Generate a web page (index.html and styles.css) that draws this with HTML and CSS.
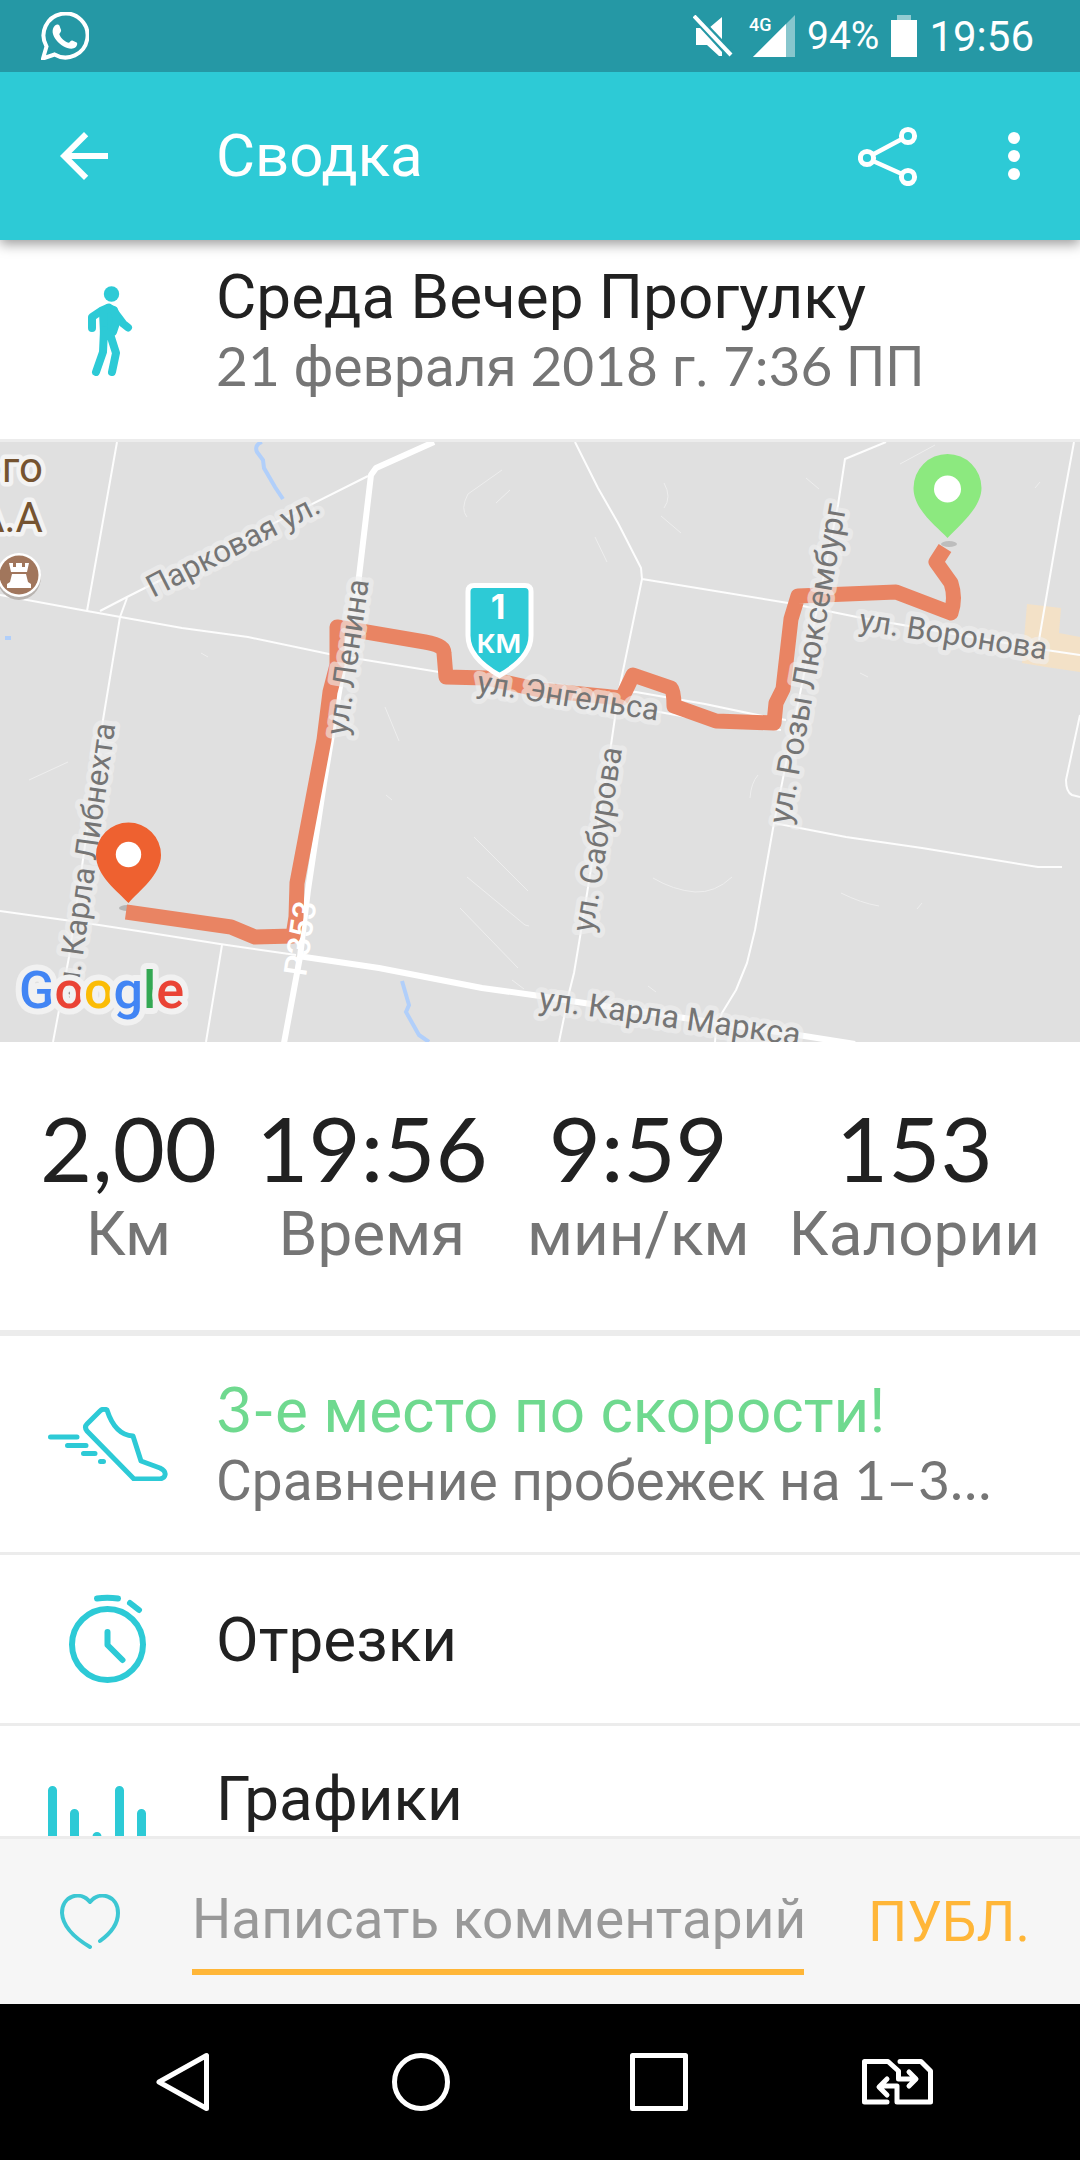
FILE: index.html
```html
<!DOCTYPE html>
<html lang="ru">
<head>
<meta charset="utf-8">
<meta name="viewport" content="width=device-width, initial-scale=1">
<title>Сводка</title>
<link rel="stylesheet" href="styles.css">
</head>
<body>
<div class="status">
  <svg class="status-app" width="48" height="48" viewBox="0 0 48 48" fill="none" aria-hidden="true">
    <path d="M2 46.500L5.500 34.500A22 22 0 1 1 13.500 42.500Z" stroke="#fff" stroke-width="4" stroke-linejoin="miter"/>
    <path d="M14 13.500c2-1.500 4-1 4.600.5l1.500 4.200c.4 1.500-1.800 3-1.800 4 1.200 3.600 5.400 7.400 9.200 8.600 1.300 0 2.400-2.600 3.800-2.200l4.400 2c1 .7.500 3.200-.8 4.400-3.400 3-8.400 1.400-12.600-.8-5.200-3-9.600-8-10.600-13.400-.4-2.800.4-5.600 2.300-7.300z" fill="#fff"/>
  </svg>
  <div class="status-right">
    <svg width="40" height="42" viewBox="0 0 40 42" aria-hidden="true">
      <path d="M3 13h4l22 24v4h-3L14 30H3zM16 13l13-11v26z" fill="#fff"/>
      <path d="M5 1l35 37" stroke="#2598a5" stroke-width="3"/>
      <path d="M1 1l37 39" stroke="#fff" stroke-width="4"/>
    </svg>
    <span class="signal">
      <span class="signal-type">4G</span>
      <svg width="42" height="42" viewBox="0 0 42 42" aria-hidden="true">
        <path d="M0 42L42 0v42z" fill="#fff" opacity=".45"/><path d="M0 42L33 9v33z" fill="#fff"/>
      </svg>
    </span>
    <span class="battery-text">94%</span>
    <svg width="26" height="42" viewBox="0 0 26 42" aria-hidden="true">
      <path d="M6 0h14v5H6z" fill="#fff" opacity=".5"/><path d="M0 5h26v37H0z" fill="#fff"/>
    </svg>
    <span class="clock">19:56</span>
  </div>
</div>

<header class="appbar">
  <button class="icon-btn back" type="button" aria-label="Назад">
    <svg width="72" height="72" viewBox="0 0 24 24" fill="#fff"><path d="M20 11H7.830l5.590-5.590L12 4l-8 8 8 8 1.410-1.410L7.830 13H20v-2z"/></svg>
  </button>
  <h1 class="appbar-title">Сводка</h1>
  <button class="icon-btn" type="button" aria-label="Поделиться">
    <svg width="60" height="60" viewBox="0 0 60 60" fill="none" stroke="#fff">
      <g stroke-width="5"><circle cx="9" cy="32" r="6.600"/><circle cx="50" cy="10" r="6.600"/><circle cx="50" cy="51" r="6.600"/></g>
      <path d="M15 28.500L44 13M15 35l29 13" stroke-width="4.500"/>
    </svg>
  </button>
  <button class="icon-btn more" type="button" aria-label="Ещё">
    <svg width="12" height="48" viewBox="0 0 12 48" fill="#fff"><circle cx="6" cy="6" r="6"/><circle cx="6" cy="24" r="6"/><circle cx="6" cy="42" r="6"/></svg>
  </button>
</header>

<main class="content">
  <section class="activity">
    <svg class="row-icon" width="216" height="90" viewBox="0 0 216 90" aria-hidden="true">
      <g fill="#2dcad6" stroke="#2dcad6" stroke-linecap="round" stroke-linejoin="round">
        <circle cx="111.500" cy="8" r="7.700" stroke="none"/>
        <path d="M92 42V31l9-6 8-3.500 5 4 9 12 5 4" fill="none" stroke-width="8"/>
        <path d="M103 26l5-4 6 2 3 10-4 12-9 2z" stroke-width="8"/>
        <path d="M104 44l-1 22-7 20M110 48l6 19-4 19" fill="none" stroke-width="8"/>
      </g>
    </svg>
    <div class="row-text">
      <h2 class="row-title">Среда Вечер Прогулку</h2>
      <p class="row-sub"><span class="num">21</span> февраля <span class="num">2018</span> г. <span class="num">7:36</span> ПП</p>
    </div>
  </section>

  <svg class="map" viewBox="0 442 1080 600" role="img" aria-label="Карта маршрута">
    <rect y="442" width="1080" height="600" fill="#e0e0e0"/>
    <path d="M1027 604l34 4-2 25 21 4v35l-34-5-24-4z" fill="#f3e1c7"/>
    <g fill="none" stroke="#eee" stroke-width="1">
      <path d="M502 470l-34 24q-8 15-1 23M510 490l-14 13M386 795l6 5M474 837l54 54M467 877l58 48 4 1M460 908l58 60M29 780l39-18M900 464l35-19M806 478l13 11M661 516l20 17M664 483q8 14 0 25M595 537l12 25M653 878q20 12 42 14 20 1 37-15M841 893q20 10 38 13M750 798q1-15 8-23M860 673l8 4M385 707l14 34M201 653l7 4M1035 488l5-6M917 909l5-6M648 986l8 6M512 980l12 9"/>
    </g>
    <g fill="none" stroke="#fdfdfd" stroke-width="2" stroke-linejoin="round">
      <path d="M117 442L87 611M100 611l27-14 241-121M127 598l-7 19-17 103-34 237-16 85M222 945l-16 97"/>
      <path d="M0 595l87 16 95 17 66 9 81 17 110 18 100 14 97 6 69 12 62 13 19 3M654 711l60 11 67 8"/>
      <path d="M575 442l23 46 20 35 23 45 1 11-23 111-8 55-31 192-6 36-5 20-10 49M642 579l146 24 69 14 189 33 34 5"/>
      <path d="M1074 442l-14 76-15 87-6 35M886 442l-41 17-7 46-64 318-19 107-8 33-11 27-14 23-6 17-1 12M774 823l72 14 76 11 116 19h24M1080 715l-8 37-6 28q0 12 6 15l8 2"/>
      <path d="M0 911l86 12 52 8 82 13 76 11"/>
    </g>
    <g fill="none" stroke="#fff" stroke-width="6" stroke-linejoin="round">
      <path d="M434 442l-58 26-5 7-13 110-19 107-15 91-16 107-8 67-16 86M298 956l81 12 103 20 58 8 31 5 227 34 57 9"/>
    </g>
    <path d="M262 442q-8 3-5 10l6 8 1 8 11 19 8 12M402 981l7 24-3 7 13 23 10 7M5 638h6" fill="none" stroke="#b1cffa" stroke-width="4"/>
    <ellipse cx="127" cy="908" rx="8" ry="3" fill="#b5b5b5"/>
    <path d="M126 912l105 15 24 10 38-1 3-19 1-34 27-143 6-48 7-27v-38l88 15q19 3 19 11l2 24 40 1 54 12 82 8 11-23 38 13q3 3 3 18l42 15 58 2 2-20 7-14 8-70 7-23 98-4 55 21q5-15 0-30l-15-21 9-14" fill="none" stroke="#e98463" stroke-width="15" stroke-linejoin="round"/>
    <g class="map-label">
      <text transform="translate(153 598) rotate(-27)">Парковая ул.</text>
      <text transform="translate(347 736) rotate(-82)">ул. Ленина</text>
      <text transform="translate(476 692) rotate(9)">ул. Энгельса</text>
      <text class="map-label-main" transform="translate(790 825) rotate(-80)">ул. Розы Люксембург</text>
      <text transform="translate(858 630) rotate(9)">ул. Воронова</text>
      <text transform="translate(593 933) rotate(-81)">ул. Сабурова</text>
      <text transform="translate(76 1004) rotate(-82)">ул. Карла Либнехта</text>
      <text class="map-label-main" transform="translate(538 1009) rotate(8)">ул. Карла Маркса</text>
    </g>
    <text class="map-road" transform="translate(306 977) rotate(-82)">P353</text>
    <g class="map-place">
      <text x="43" y="482" text-anchor="end">ого</text>
      <text x="43" y="532" text-anchor="end">А.А</text>
    </g>
    <ellipse cx="19" cy="577" rx="22" ry="23" fill="#b9b4b0"/>
    <circle cx="19" cy="575" r="22" fill="#fff"/><circle cx="19" cy="575" r="19.500" fill="#a1765c"/>
    <path d="M9 563h4v4h3v-4h6v4h3v-4h4l-2 9H11zM12 574h14l2 8 3 2v4H7v-4l3-2z" fill="#fff"/>

    <path d="M474 585.500h51q6 0 6 6v44c0 17-14 30-31.500 40-17.500-10-31.500-23-31.500-40v-44q0-6 6-6z" fill="#2dcad6" stroke="#fff" stroke-width="5"/>
    <g class="map-km"><text class="map-km-count" x="498" y="619">1</text><text x="499" y="653">км</text></g>

    <ellipse cx="949" cy="544" rx="8" ry="3" fill="#bdbdbd"/>
    <path d="M947.500 538c-10-11-34-28-34-50a34 34 0 0 1 68 0c0 20-23 38-34 50z" fill="#8ce97f"/>
    <circle cx="947.500" cy="489" r="13.500" fill="#fff"/>
    <path d="M128.500 903c-10-11-32.500-27-32.500-48a32.500 32.500 0 0 1 65 0c0 20-22 36-32.500 48z" fill="#ee6130"/>
    <circle cx="128.500" cy="854.500" r="12.700" fill="#fff"/>
    <text class="map-logo" x="19" y="1008"><tspan fill="#4285f4">G</tspan><tspan fill="#ea4335">o</tspan><tspan fill="#fbbc05">o</tspan><tspan fill="#4285f4">g</tspan><tspan fill="#34a853">l</tspan><tspan fill="#ea4335">e</tspan></text>
  </svg>

  <dl class="stats">
    <div class="stat"><dt>Км</dt><dd>2,00</dd></div>
    <div class="stat"><dt>Время</dt><dd>19:56</dd></div>
    <div class="stat"><dt>мин/км</dt><dd>9:59</dd></div>
    <div class="stat"><dt>Калории</dt><dd>153</dd></div>
  </dl>

  <a class="row row-tall" href="#rank">
    <svg class="row-icon" width="216" height="74" viewBox="0 0 216 74" fill="none" stroke="#2dcad6" stroke-width="5" stroke-linecap="round" stroke-linejoin="round" aria-hidden="true">
      <path d="M50.500 30H77M67.500 38.500H86M83.500 46.500H95M100.500 54.500h3"/>
      <path d="M87 17l13-13q3-3 7-1 8 25 26 26l8 25 19 7q6 3 5 7t-7 4h-24L87 24q-3-4 0-7z"/>
    </svg>
    <div class="row-text">
      <h2 class="row-title rank"><span class="num">3-</span>е место по скорости!</h2>
      <p class="row-sub">Сравнение пробежек на <span class="num">1–3…</span></p>
    </div>
  </a>
  <a class="row" href="#splits">
    <svg class="row-icon" width="216" height="90" viewBox="0 0 216 90" fill="none" stroke="#2dcad6" stroke-width="6" stroke-linecap="round" stroke-linejoin="round" aria-hidden="true">
      <circle cx="107.500" cy="50.500" r="35.500"/><path d="M97 4.500q10-1.500 21 0M130 9l9 7M107.500 38v13l15 15"/>
    </svg>
    <h2 class="row-title">Отрезки</h2>
  </a>
  <a class="row row-last" href="#charts">
    <svg class="row-icon" width="216" height="96" viewBox="0 0 216 96" fill="none" stroke="#2dcad6" stroke-width="9" stroke-linecap="round" aria-hidden="true">
      <path d="M52.500 4.500V91M74.500 27.500V91M97 50.500V91M119.500 4.500V91M141.500 27.500V91"/>
    </svg>
    <h2 class="row-title">Графики</h2>
  </a>
</main>

<form class="comment">
  <button class="icon-btn like" type="button" aria-label="Нравится">
    <svg width="60" height="56" viewBox="0 0 60 56" fill="none" stroke="#3cc7d3" stroke-width="4" stroke-linecap="round" stroke-linejoin="round"><path d="M40 47Q58 34 58 19C58 2 40-4 30 8 20-4 2 2 2 19Q3 37 30 53"/></svg>
  </button>
  <input class="comment-input" type="text" aria-label="Комментарий" placeholder="Написать комментарий">
  <button class="comment-send" type="button">ПУБЛ.</button>
</form>

<nav class="nav">
  <button class="icon-btn" type="button" aria-label="Назад"><svg width="60" height="60" viewBox="0 0 60 60"><path d="M6 30L53.500 3.500v53z"/></svg></button>
  <button class="icon-btn" type="button" aria-label="Домой"><svg width="60" height="60" viewBox="0 0 60 60"><circle cx="30" cy="30" r="26.500"/></svg></button>
  <button class="icon-btn" type="button" aria-label="Обзор"><svg width="60" height="60" viewBox="0 0 60 60"><path d="M3.500 3.500h53v53h-53z"/></svg></button>
  <button class="icon-btn" type="button" aria-label="Сменить SIM"><svg width="72" height="48" viewBox="0 0 72 48"><path d="M26 44H3.500V3.500H27L37.500 13v8H54M48 14l7 7-7 7M39 3.500H60L69.500 13v31H36V28H20M26 21l-8 8 8 8"/></svg></button>
</nav>
</body>
</html>
```
FILE: styles.css
```css
* {
  box-sizing: border-box;
}

body {
  margin: 0;
  height: 100vh;
  display: flex;
  flex-direction: column;
  background: #fff;
  color: #212121;
  font-family: Roboto, "Liberation Sans", sans-serif;
}

h1, h2, p, dl, dd {
  margin: 0;
  font-weight: 400;
}

button {
  padding: 0;
  border: 0;
  background: none;
  font: inherit;
  cursor: pointer;
}

svg {
  display: block;
  flex: none;
}

.icon-btn {
  display: flex;
  align-items: center;
  justify-content: center;
}

/* Status bar */
.status {
  position: relative;
  z-index: 2;
  display: flex;
  align-items: center;
  justify-content: space-between;
  height: 72px;
  padding: 0 46px 0 41px;
  background: #2598a5;
  color: #fff;
}

.status-right {
  display: flex;
  align-items: center;
  gap: 12px;
}

.signal {
  position: relative;
  padding-left: 8px;
}

.signal-type {
  position: absolute;
  left: 4px;
  top: -2px;
  font-size: 18px;
  font-weight: 500;
  line-height: 24px;
}

.battery-text {
  font-size: 39px;
}

.clock {
  font-size: 42px;
}

/* App bar */
.appbar {
  position: relative;
  z-index: 1;
  display: flex;
  align-items: center;
  height: 168px;
  padding-right: 60px;
  background: #2dcad6;
  color: #fff;
  box-shadow: 0 4px 12px rgba(0, 0, 0, 0.4);
}

.back {
  width: 168px;
}

.appbar-title {
  flex: 1;
  padding-left: 48px;
  font-size: 60px;
  line-height: 72px;
}

.more {
  margin-left: 90px;
}

/* Scrolling content */
.content {
  flex: 1;
  min-height: 0;
  overflow-y: auto;
  scrollbar-width: none;
}

.activity {
  display: flex;
  align-items: center;
  padding: 20px 0 38px;
  border-bottom: 3px solid #ececec;
}

.row-text {
  flex: 1;
  min-width: 0;
}

.row-title {
  font-size: 62px;
  line-height: 73px;
}

.row-sub {
  color: #757575;
  font-size: 55px;
  line-height: 68px;
  white-space: nowrap;
}

.num {
  font-family: Lato, Roboto, sans-serif;
  font-size: 55px;
  font-weight: 400;
  line-height: 1;
}

.rank .num {
  font-size: 62px;
}

/* Map */
.map {
  width: 100%;
  height: auto;
}

.map-label {
  fill: #757575;
  stroke: rgba(240, 240, 240, 0.6);
  stroke-width: 10px;
  stroke-linejoin: round;
  paint-order: stroke;
  font-size: 31px;
}

.map-label-main {
  font-size: 32px;
}

.map-road {
  fill: #fff;
  font-size: 32px;
  font-weight: 500;
}

.map-place {
  fill: #755330;
  stroke: #f3f3f3;
  stroke-width: 9px;
  stroke-linejoin: round;
  paint-order: stroke;
  font-size: 42px;
}

.map-km {
  fill: #fff;
  font-family: Inter, sans-serif;
  font-size: 34px;
  font-weight: 500;
  text-anchor: middle;
}

.map-km-count {
  font-weight: 700;
}

.map-logo {
  stroke: #f1f1f1;
  stroke-width: 12px;
  stroke-linejoin: round;
  paint-order: stroke;
  font-size: 52px;
  font-weight: 500;
}

/* Stats */
.stats {
  display: flex;
  justify-content: space-between;
  padding: 56px 40px 58px;
  border-bottom: 6px solid #ececec;
}

.stat {
  display: flex;
  flex-direction: column-reverse;
  text-align: center;
}

.stat dt {
  color: #757575;
  font-size: 62px;
  line-height: 76px;
}

.stat dd {
  font-family: Lato, Roboto, sans-serif;
  font-size: 90px;
  font-weight: 400;
  line-height: 98px;
}

/* Rows */
.row {
  display: flex;
  align-items: center;
  min-height: 171px;
  border-bottom: 3px solid #ececec;
  color: inherit;
  text-decoration: none;
}

.row-tall {
  min-height: 219px;
}

.row-last {
  align-items: flex-start;
  padding: 36px 0;
}

.row-last .row-icon {
  margin-top: 24px;
}

.rank {
  color: #6fd98f;
}

/* Comment bar */
.comment {
  display: flex;
  align-items: center;
  height: 168px;
  padding-right: 50px;
  border-top: 3px solid #ececec;
  background: #f6f6f6;
}

.like {
  width: 180px;
}

.comment-input {
  flex: 1;
  min-width: 0;
  height: 106px;
  margin-left: 12px;
  padding: 0;
  border: 0;
  border-bottom: 6px solid #ffb638;
  border-radius: 0;
  outline: 0;
  background: none;
  color: #212121;
  font: inherit;
  font-size: 55px;
}

.comment-input::placeholder {
  color: #999;
  opacity: 1;
}

.comment-send {
  margin-left: 64px;
  color: #ffb638;
  font-size: 55px;
}

/* Navigation bar */
.nav {
  display: grid;
  grid-template-columns: repeat(4, 1fr);
  height: 156px;
  padding: 0 64px;
  background: #000;
}

.nav svg {
  fill: none;
  stroke: #fff;
  stroke-width: 5px;
  stroke-linecap: round;
  stroke-linejoin: round;
}
```
